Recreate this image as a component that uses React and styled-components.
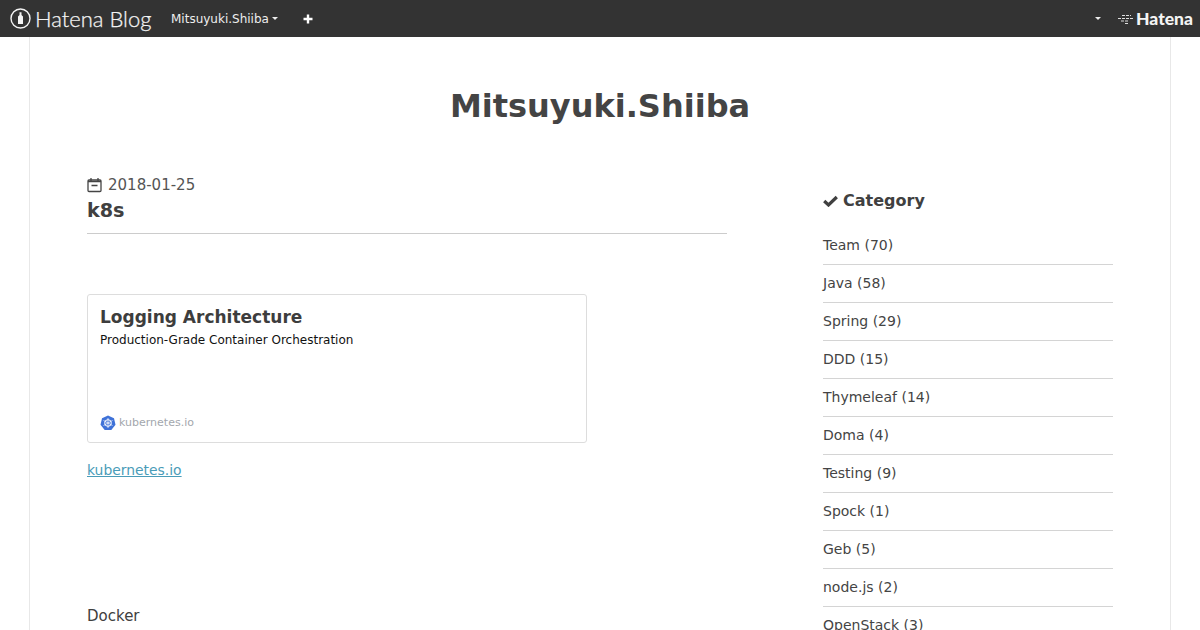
import React from 'react';
import styled, { createGlobalStyle } from 'styled-components';

const categories = [
  'Team (70)', 'Java (58)', 'Spring (29)', 'DDD (15)', 'Thymeleaf (14)', 'Doma (4)',
  'Testing (9)', 'Spock (1)', 'Geb (5)', 'node.js (2)', 'OpenStack (3)',
];

const GlobalStyle = createGlobalStyle`
  html, body {
    margin: 0;
    height: 630px;
    overflow: hidden;
    background: #fff;
    font-family: "DejaVu Sans", sans-serif;
    color: #404040;
  }
`;

const TopBar = styled.header`
  height: 37px;
  background: #333;
  color: #fff;
  display: flex;
  align-items: center;
  padding: 0 7px 0 10px;
`;

const Logo = styled.div`
  display: flex;
  align-items: center;
  gap: 4px;
  width: 161px;
  font-family: "Lato", sans-serif;
  font-weight: 300;
  font-size: 22px;
  -webkit-text-stroke: 0.25px #f4f4f4;
  color: #f4f4f4;
`;

const UserMenu = styled.div`
  font-size: 12px;
  color: #eee;
  display: flex;
  align-items: center;
  gap: 3px;
  width: 132px;
`;

const Caret = styled.span`
  display: inline-block;
  border-top: 3px solid #eee;
  border-left: 3px solid transparent;
  border-right: 3px solid transparent;
`;

const RightMenu = styled.div`
  margin-left: auto;
  display: flex;
  align-items: center;
  gap: 16px;
`;

const HatenaMark = styled.div`
  display: flex;
  align-items: center;
  gap: 1px;
  font-family: "Lato", sans-serif;
  font-weight: 900;
  font-size: 17.5px;
  color: #f4f4f4;
`;

const Sheet = styled.div`
  width: 1140px;
  height: 593px;
  margin: 0 auto;
  border-left: 1px solid #e8e8e8;
  border-right: 1px solid #e8e8e8;
  overflow: hidden;
`;

const BlogTitle = styled.h1`
  margin: 0;
  padding-top: 49px;
  height: 40px;
  line-height: 40px;
  text-align: center;
  font-size: 32px;
  font-weight: 700;
  color: #444;
`;

const Columns = styled.div`
  display: flex;
  justify-content: space-between;
  padding: 48px 57px 0;
`;

const Main = styled.main`
  width: 640px;
`;

const EntryDate = styled.div`
  display: flex;
  align-items: center;
  gap: 6px;
  font-size: 15px;
  line-height: 22px;
  color: #555;
`;

const EntryTitle = styled.h2`
  margin: 0;
  padding: 1px 0 8px;
  font-size: 19.2px;
  line-height: 28px;
  font-weight: 700;
  color: #404040;
  border-bottom: 1px solid #ccc;
`;

const Card = styled.div`
  box-sizing: border-box;
  width: 500px;
  height: 149px;
  margin-top: 60px;
  padding: 12px;
  border: 1px solid #ddd;
  border-radius: 3px;
  display: flex;
  flex-direction: column;
`;

const CardTitle = styled.div`
  font-size: 17px;
  line-height: 20px;
  font-weight: 700;
  color: #3d3d3d;
`;

const CardText = styled.div`
  font-size: 12px;
  line-height: 16px;
  margin-top: 5px;
  color: #111;
`;

const CardSite = styled.div`
  margin-top: auto;
  display: flex;
  align-items: center;
  gap: 3px;
  font-size: 11px;
  color: #a3a7ad;
  height: 16px;

  svg {
    margin-top: 2px;
  }
`;

const SourceLink = styled.a`
  display: block;
  margin-top: 17px;
  font-size: 13.9px;
  line-height: 20px;
  color: #4a9cb8;
  text-decoration: underline;
`;

const Paragraph = styled.p`
  margin: 124px 0 0;
  font-size: 15px;
  line-height: 24px;
  color: #404040;
`;

const Side = styled.aside`
  width: 290px;
  padding-top: 15px;
`;

const SideTitle = styled.div`
  display: flex;
  align-items: center;
  gap: 5px;
  font-size: 16px;
  font-weight: 700;
  line-height: 24px;
  color: #404040;
  margin-bottom: 14px;
`;

const CategoryRow = styled.div`
  box-sizing: border-box;
  height: 38px;
  padding-top: 8px;
  font-size: 14px;
  line-height: 20px;
  color: #444;
  border-bottom: 1px solid #d4d4d4;
`;

const HatenaBlogIcon = () => (
  <svg width="21" height="21" viewBox="0 0 21 21">
    <circle cx="10.5" cy="10.5" r="9.5" fill="none" stroke="#f4f4f4" strokeWidth="1.4" />
    <path d="M8 8.5 L9.5 7 V4.3 H11.5 V7 L13 8.5 V16 H8 Z" fill="#f4f4f4" />
  </svg>
);

const CloudIcon = () => (
  <svg width="18" height="12" viewBox="0 0 18 12" fill="none" stroke="#ddd" strokeWidth="1" strokeDasharray="3 1">
    <path d="M5 2.5 H14" />
    <path d="M1 5.5 H17" />
    <path d="M4 8 H12" />
    <path d="M8 10.5 H11" />
  </svg>
);

const PlusIcon = () => (
  <svg width="10" height="10" viewBox="0 0 10 10">
    <path d="M5 0.5 V9.5 M0.5 5 H9.5" stroke="#fff" strokeWidth="2.4" />
  </svg>
);

const CalendarIcon = () => (
  <svg width="15" height="15" viewBox="0 0 15 15" fill="none" stroke="#444" strokeWidth="1.3">
    <rect x="1" y="2" width="13" height="11.5" rx="1" />
    <path d="M1 3.5 H14 M4 0 V3 M11 0 V3 M4.5 7.5 H10.5" />
  </svg>
);

const CheckIcon = () => (
  <svg width="15" height="12" viewBox="0 0 15 12" fill="none" stroke="#404040" strokeWidth="3.2">
    <path d="M1.2 6 L5.5 10 L13.8 2" />
  </svg>
);

const KubeIcon = () => (
  <svg width="16" height="16" viewBox="0 0 16 16">
    <path d="M8 0.5 L14 3.3 L15.5 9.8 L11.3 15 H4.7 L0.5 9.8 L2 3.3 Z" fill="#3f72d8" />
    <circle cx="8" cy="8" r="3.3" fill="none" stroke="#fff" strokeWidth="1" />
    <path d="M8 3 V13 M3.5 5.5 L12.5 10.5 M12.5 5.5 L3.5 10.5" stroke="#fff" strokeWidth="0.7" />
  </svg>
);

export default function App() {
  return (
    <>
      <GlobalStyle />
      <TopBar>
        <Logo>
          <HatenaBlogIcon />
          Hatena Blog
        </Logo>
        <UserMenu>
          Mitsuyuki.Shiiba <Caret />
        </UserMenu>
        <PlusIcon />
        <RightMenu>
          <Caret />
          <HatenaMark>
            <CloudIcon />
            Hatena
          </HatenaMark>
        </RightMenu>
      </TopBar>
      <Sheet>
        <BlogTitle>Mitsuyuki.Shiiba</BlogTitle>
        <Columns>
          <Main>
            <EntryDate>
              <CalendarIcon />
              2018-01-25
            </EntryDate>
            <EntryTitle>k8s</EntryTitle>
            <Card>
              <CardTitle>Logging Architecture</CardTitle>
              <CardText>Production-Grade Container Orchestration</CardText>
              <CardSite>
                <KubeIcon />
                kubernetes.io
              </CardSite>
            </Card>
            <SourceLink href="#">kubernetes.io</SourceLink>
            <Paragraph>Docker</Paragraph>
          </Main>
          <Side>
            <SideTitle>
              <CheckIcon />
              Category
            </SideTitle>
            {categories.map((c) => (
              <CategoryRow key={c}>{c}</CategoryRow>
            ))}
          </Side>
        </Columns>
      </Sheet>
    </>
  );
}
